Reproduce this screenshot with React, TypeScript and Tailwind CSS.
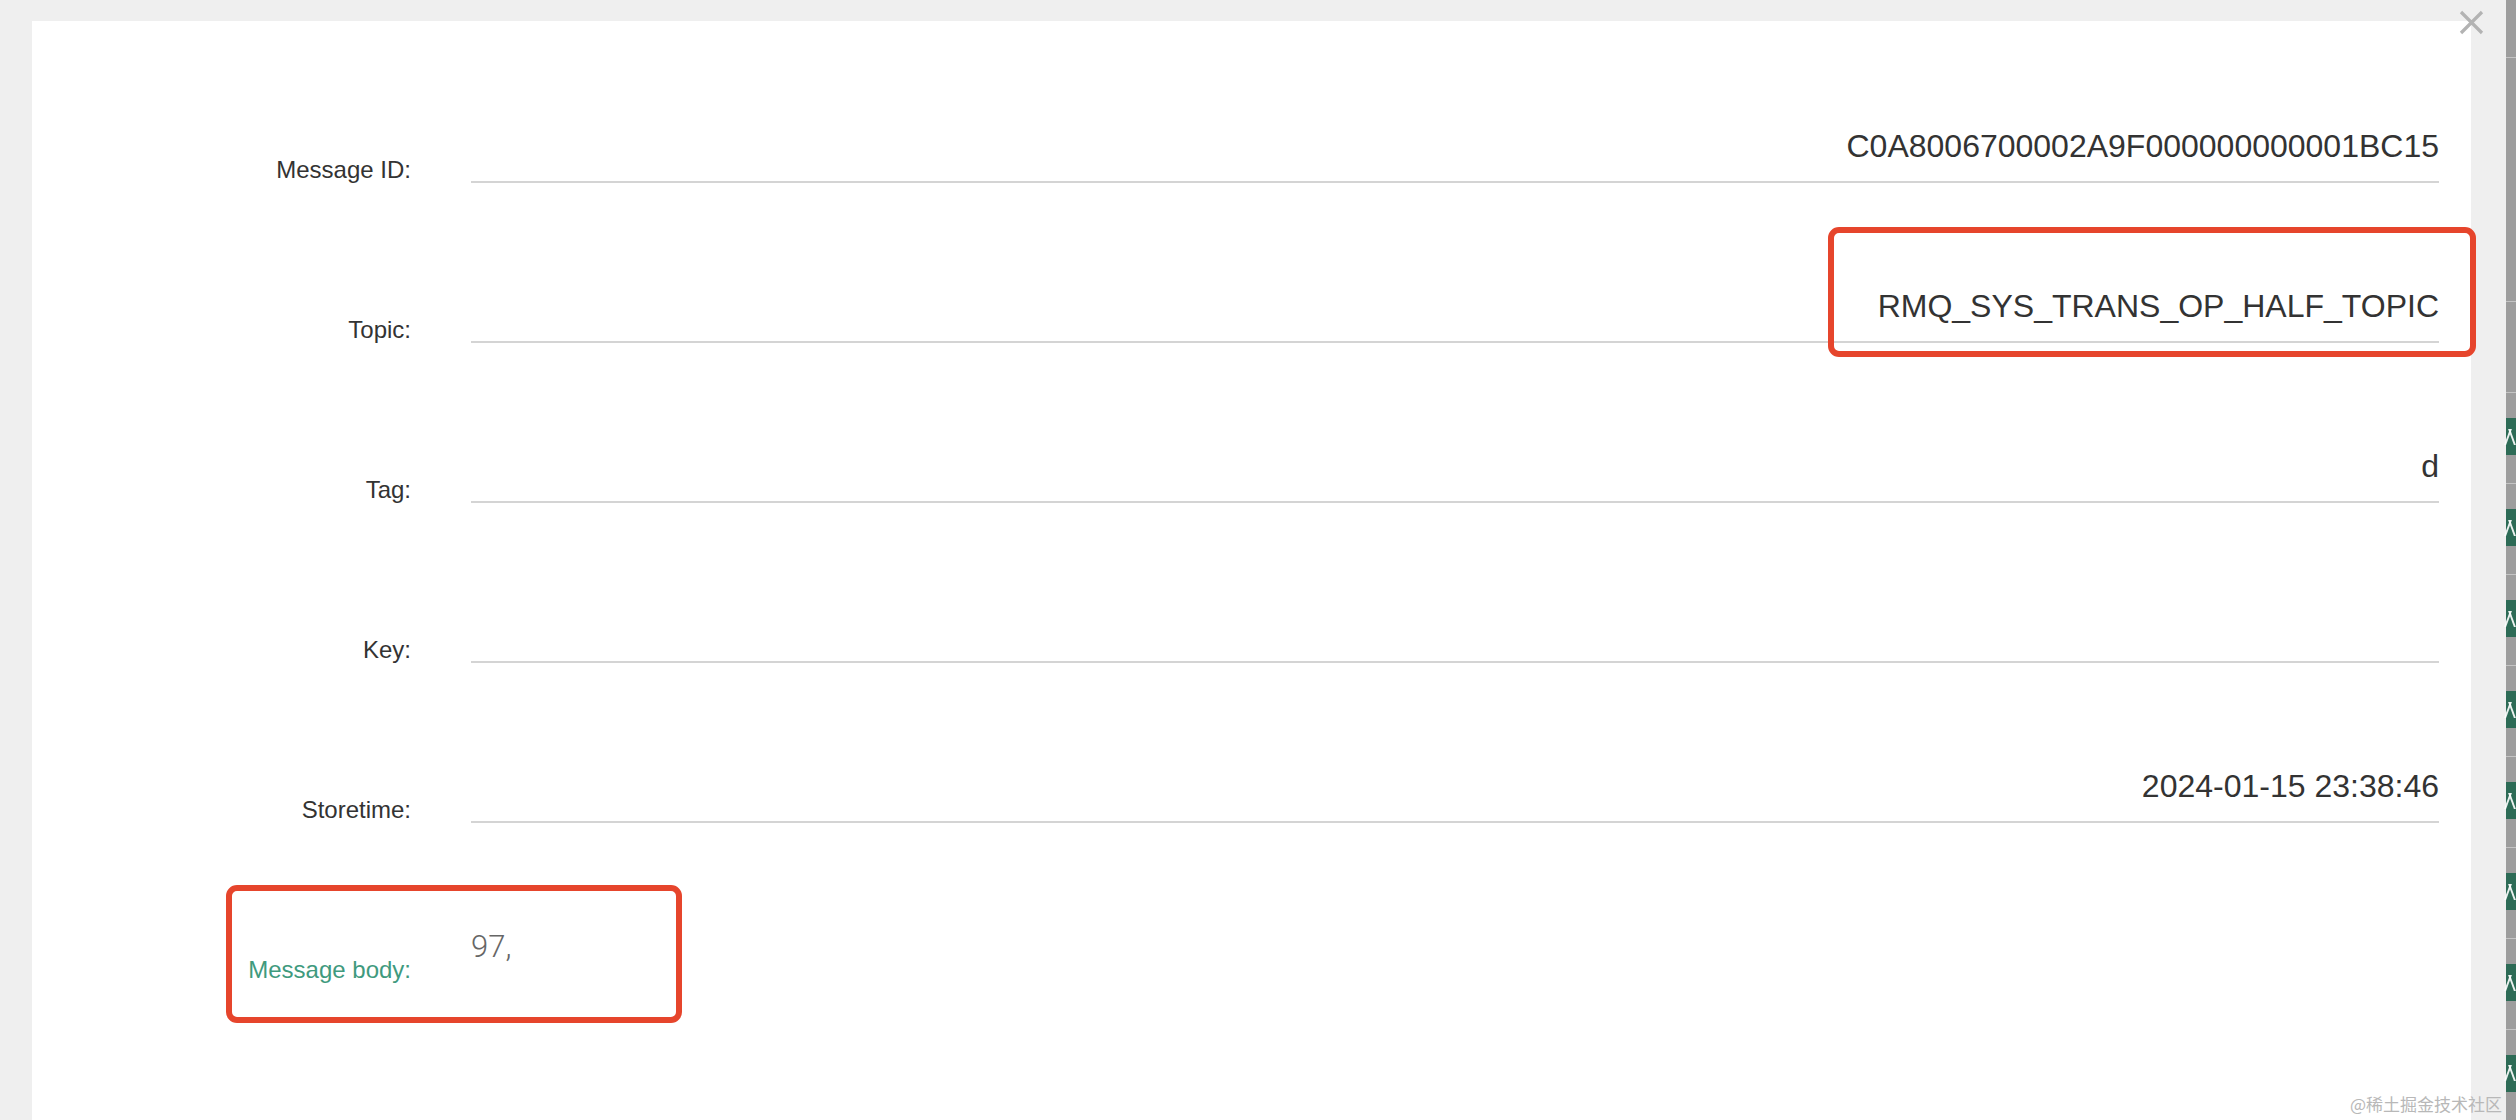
const rows = [
  { label: 'Message ID:', value: 'C0A8006700002A9F000000000001BC15' },
  { label: 'Topic:', value: 'RMQ_SYS_TRANS_OP_HALF_TOPIC' },
  { label: 'Tag:', value: 'd' },
  { label: 'Key:', value: '' },
  { label: 'Storetime:', value: '2024-01-15 23:38:46' },
]

// the table behind the modal peeks out on the right edge
function StripRow() {
  return (
    <div className="flex h-[92px] flex-col">
      <div className="h-px bg-[#c4c4c4]" />
      <div className="h-[25px] bg-[#9d9d9d]" />
      <div className="flex h-[37px] items-center gap-[2px] bg-[#2d6b56] pl-[1px]">
        <div className="h-[16px] w-[2px] -skew-x-[20deg] bg-white/90" />
        <div className="h-[16px] w-[2px] skew-x-[20deg] bg-white/90" />
      </div>
      <div className="flex-1 bg-[#9d9d9d]" />
    </div>
  )
}

export default function App() {
  return (
    <div className="relative flex h-[1120px] overflow-hidden bg-[#efefef] font-['Liberation_Sans',Arial,sans-serif]">
      <div className="flex flex-1 pl-[32px] pr-[35px] pt-[21px]">
        <div className="flex flex-1 flex-col bg-white pr-[32px] pt-[2px]">
          {rows.map((r) => (
            <div key={r.label} className="flex h-[160px] items-end gap-[60px]">
              <div className="w-[379px] shrink-0 pb-[1px] text-right text-[24px] leading-[24px] text-[#333]">{r.label}</div>
              <div className="flex-1 border-b-2 border-[#d4d4d4] pb-[19px] text-right text-[32px] leading-[32px] text-[#333]">
                {r.value || '\u00a0'}
              </div>
            </div>
          ))}
          <div className="flex h-[160px] items-end gap-[60px]">
            <div className="w-[379px] shrink-0 pb-[1px] text-right text-[24px] leading-[24px] text-[#3f9a7e]">Message body:</div>
            <div className="flex-1 pb-[21px] font-['Roboto',sans-serif] text-[31px] font-light leading-[31px] text-[#666]">97,</div>
          </div>
        </div>
      </div>

      <div className="flex w-[10px] flex-col">
        <div className="h-[58px] bg-[#9d9d9d]" />
        <div className="h-px bg-[#c4c4c4]" />
        <div className="h-[246px] bg-[#9d9d9d]" />
        <div className="h-px bg-[#c4c4c4]" />
        <div className="h-[91px] bg-[#9d9d9d]" />
        <StripRow />
        <StripRow />
        <StripRow />
        <StripRow />
        <StripRow />
        <StripRow />
        <StripRow />
        <StripRow />
      </div>

      <svg className="absolute left-[2459px] top-[10px]" width="25" height="25" viewBox="0 0 25 25">
        <path d="M2 2 L23 23 M23 2 L2 23" stroke="#b3b3b3" strokeWidth="3.2" />
      </svg>

      <div className="absolute left-[1828px] top-[227px] h-[130px] w-[648px] rounded-[11px] border-[6px] border-[#e6452c]" />
      <div className="absolute left-[226px] top-[885px] h-[138px] w-[456px] rounded-[11px] border-[6px] border-[#e6452c]" />

      <div className="absolute left-[2350px] top-[1094px] font-['Noto_Sans_CJK_SC',sans-serif] text-[17px] leading-[20px] text-[#b8b8b8]">
        @稀土掘金技术社区
      </div>
    </div>
  )
}
